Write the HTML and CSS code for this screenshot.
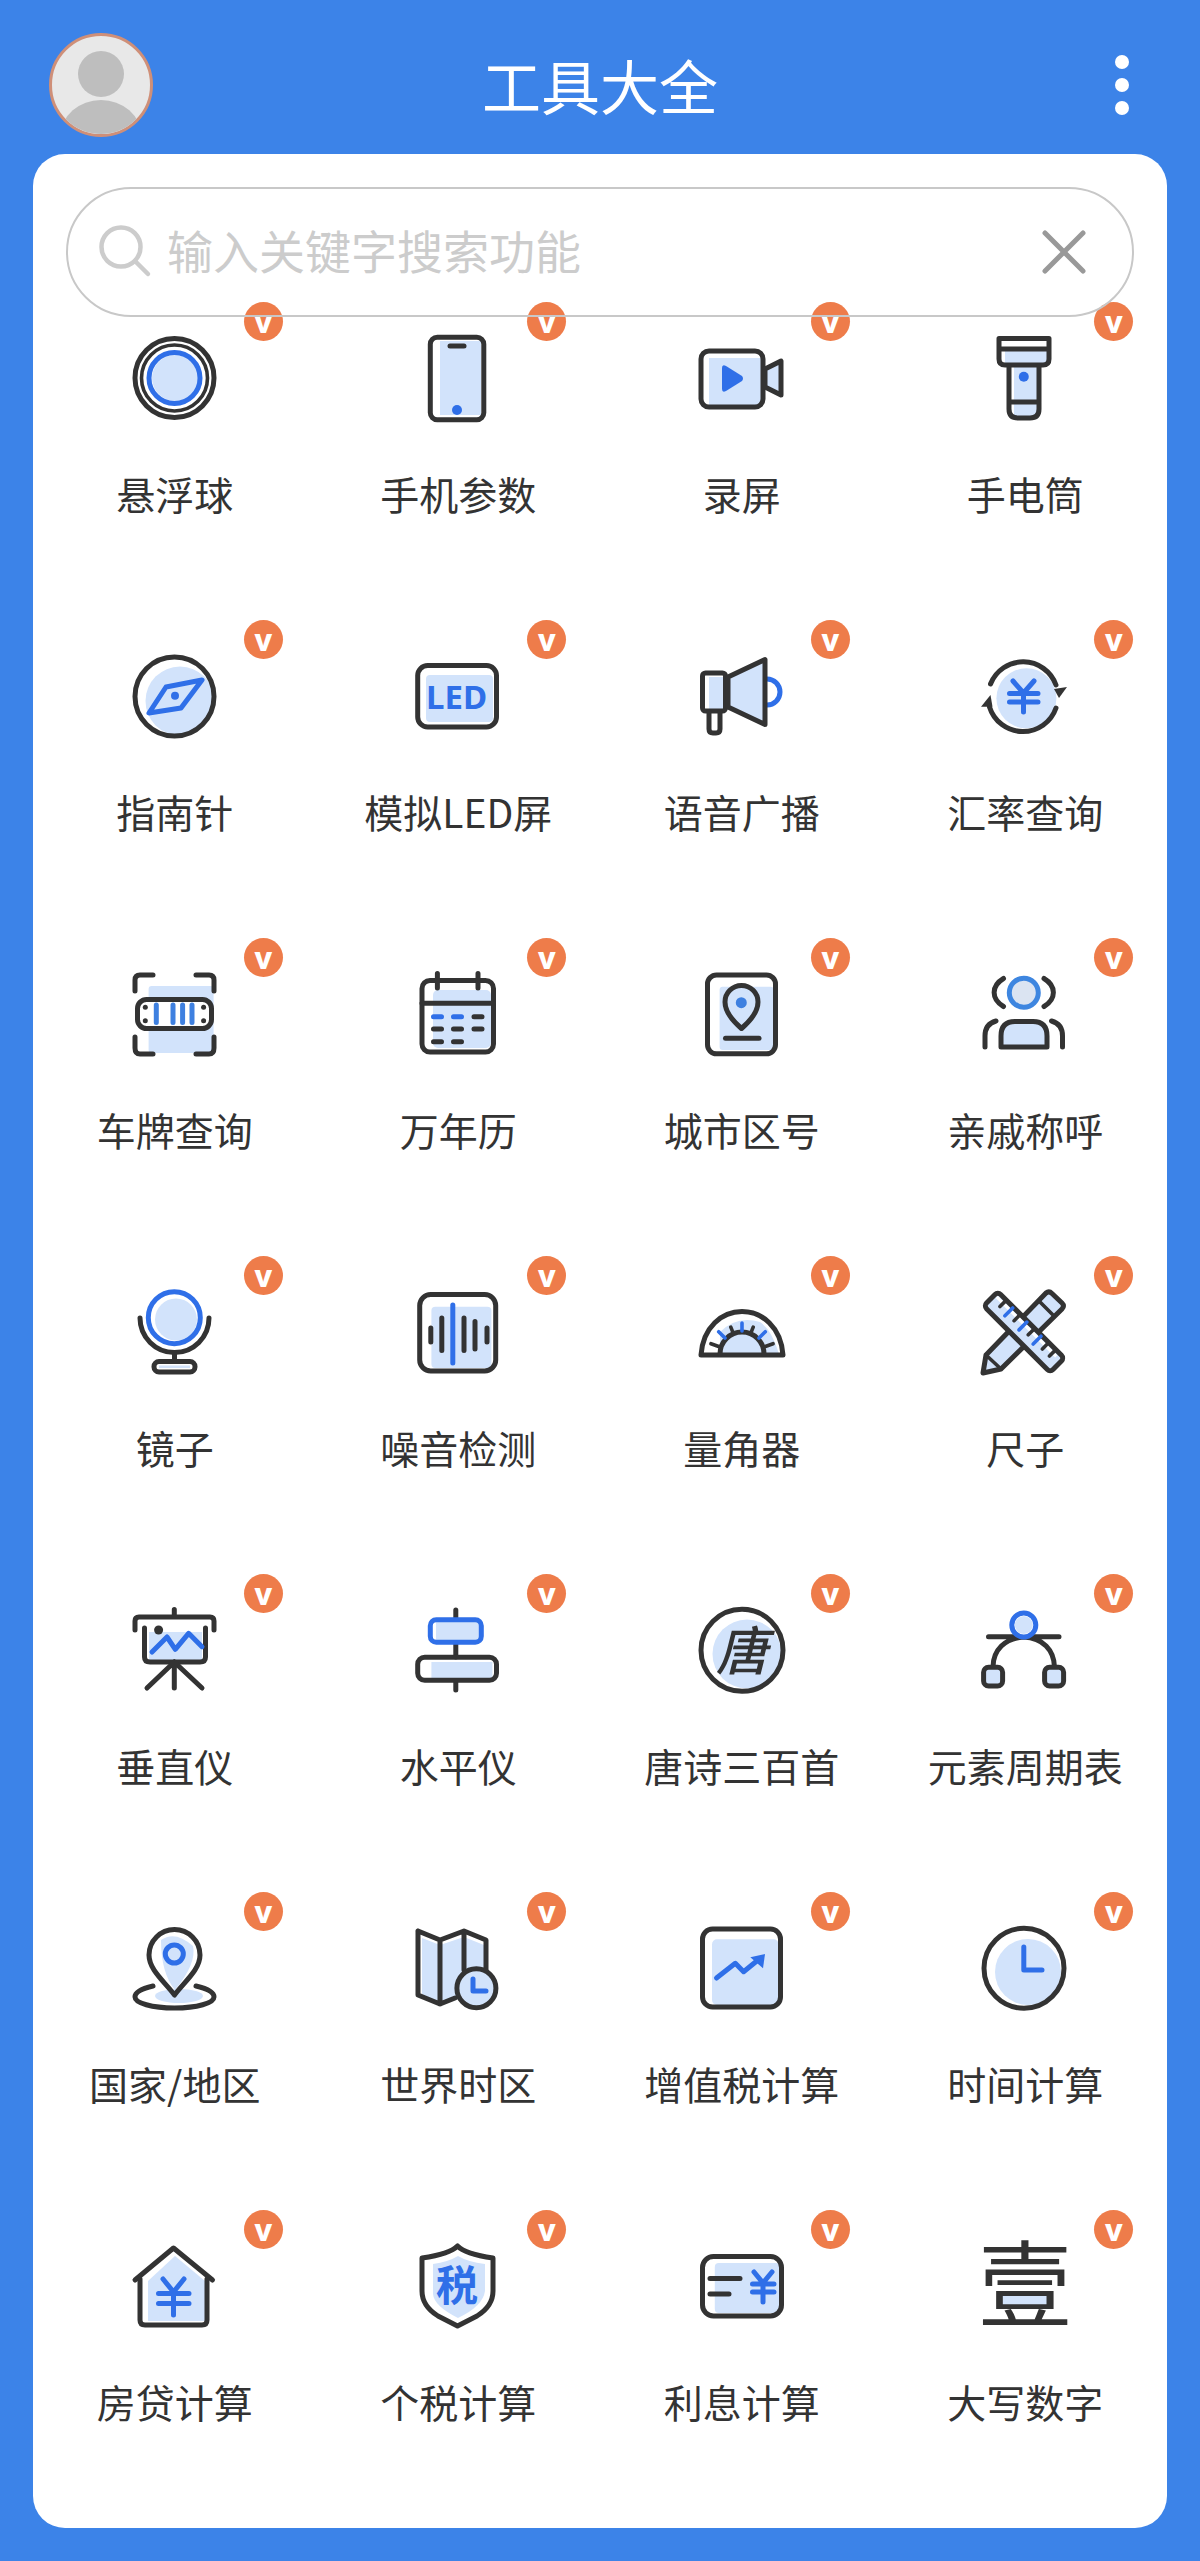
FILE: index.html
```html
<!DOCTYPE html>
<html lang="zh-CN">
<head>
    <meta charset="UTF-8">
    <meta name="viewport" content="width=device-width, initial-scale=1.0">
    <title>工具大全</title>
    <link rel="stylesheet" href="styles.css">
</head>
<body>
    <header class="topbar">
        <div class="avatar">
            <svg viewBox="0 0 98 98" width="98" height="98">
                <circle class="avatar-part" cx="49" cy="38" r="23"/>
                <ellipse class="avatar-part" cx="49" cy="99" rx="40" ry="35"/>
            </svg>
        </div>
        <h1 class="title">工具大全</h1>
        <div class="more"><span></span><span></span><span></span></div>
    </header>

    <main class="card">
        <div class="search">
            <svg class="search-icon" viewBox="0 0 56 56" width="56" height="56">
                <circle cx="24" cy="24" r="19.5"/>
                <path d="M38 38 L51 51"/>
            </svg>
            <span class="placeholder">输入关键字搜索功能</span>
            <svg class="clear-icon" viewBox="0 0 44 44" width="44" height="44">
                <path d="M3 3 L41 41 M41 3 L3 41"/>
            </svg>
        </div>

        <div class="tools">
            <div class="tool">
                <span class="vip">v</span>
                <svg class="icon" viewBox="0 0 100 100">
                    <circle class="l" cx="50" cy="50" r="23"/>
                    <circle class="d" cx="49.5" cy="50" r="39.5"/>
                    <circle class="d thin" cx="49.5" cy="50" r="33"/>
                    <circle class="b" cx="49.5" cy="50" r="25.5"/>
                </svg>
                <p class="name">悬浮球</p>
            </div>
            <div class="tool">
                <span class="vip">v</span>
                <svg class="icon" viewBox="0 0 100 100">
                    <rect class="l" x="32" y="13" width="41" height="74"/>
                    <rect class="d" x="22.3" y="9.3" width="53.5" height="82.4" rx="7"/>
                    <path class="d" d="M42 18 H56"/>
                    <circle class="bf" cx="49" cy="82" r="5"/>
                </svg>
                <p class="name">手机参数</p>
            </div>
            <div class="tool">
                <span class="vip">v</span>
                <svg class="icon" viewBox="0 0 100 100">
                    <rect class="l" x="17" y="30" width="53" height="47"/>
                    <rect class="d" x="9" y="23" width="62" height="56" rx="8"/>
                    <path class="bf" d="M30 40 Q30 36 34 38 L50 48 Q52 50.5 50 53 L34 63 Q30 65 30 61 Z"/>
                    <path class="d lf" d="M73 41 L89 33 V67 L73 59 Z"/>
                </svg>
                <p class="name">录屏</p>
            </div>
            <div class="tool">
                <span class="vip">v</span>
                <svg class="icon" viewBox="0 0 100 100">
                    <rect class="l" x="30" y="23" width="44" height="14"/>
                    <rect class="l" x="39" y="39" width="23" height="50"/>
                    <path class="d" d="M24 10.5 H74 V31 Q74 37 68 37 H30 Q24 37 24 31 Z M24 21 H74"/>
                    <path class="d" d="M34 38 V81 Q34 90 43 90 H55 Q64 90 64 81 V38 M34 74 H64"/>
                    <circle class="bf" cx="48.8" cy="48.7" r="5"/>
                </svg>
                <p class="name">手电筒</p>
            </div>

            <div class="tool">
                <span class="vip">v</span>
                <svg class="icon" viewBox="0 0 100 100">
                    <circle class="l" cx="55" cy="55" r="34.5"/>
                    <circle class="d" cx="49.5" cy="50.5" r="39.5"/>
                    <path class="b" d="M77 34 L41 41 L24 67 L56 62 Z"/>
                    <circle class="bf" cx="50" cy="49.7" r="4"/>
                </svg>
                <p class="name">指南针</p>
            </div>
            <div class="tool">
                <span class="vip">v</span>
                <svg class="icon" viewBox="0 0 100 100">
                    <rect class="l" x="18" y="29" width="67" height="47" rx="4"/>
                    <rect class="d" x="9.7" y="19.5" width="78.8" height="61.5" rx="10"/>
                    <text class="led" x="48.5" y="62.5">LED</text>
                </svg>
                <p class="name">模拟LED屏</p>
            </div>
            <div class="tool">
                <span class="vip">v</span>
                <svg class="icon" viewBox="0 0 100 100">
                    <path class="b" d="M75 33 A13 13 0 0 1 75 59"/>
                    <rect class="l" x="17" y="31" width="15" height="32"/>
                    <rect class="d" x="10.5" y="27" width="23" height="38" rx="3"/>
                    <path class="d lf" d="M36 31 L73 13.5 V78.5 L36 61 Z"/>
                    <path class="d" d="M17 66 V83 Q17 87 21 87 H24 Q28 87 28 83 V66"/>
                </svg>
                <p class="name">语音广播</p>
            </div>
            <div class="tool">
                <span class="vip">v</span>
                <svg class="icon" viewBox="0 0 100 100">
                    <circle class="l" cx="51.4" cy="52.3" r="30"/>
                    <path class="d" d="M15.5 38 A35 35 0 0 1 81 39"/>
                    <path class="d" d="M14.5 61 A35 35 0 0 0 81 62"/>
                    <path class="df" d="M92 41 L79 43 L84 52 Z"/>
                    <path class="df" d="M6 60.7 L17.5 60.7 L15.5 49 Z"/>
                    <path class="b" d="M38 35 L48.5 47 L59 35 M34.5 47.5 H63 M34.5 56 H63 M48.5 47 V66"/>
                </svg>
                <p class="name">汇率查询</p>
            </div>

            <div class="tool">
                <span class="vip">v</span>
                <svg class="icon" viewBox="0 0 100 100">
                    <rect class="l" x="23.6" y="22" width="65" height="67" rx="3"/>
                    <path class="d" d="M10 27 V16 Q10 11 15 11 H28 M71 11 H84 Q89 11 89 16 V27 M10 73 V84 Q10 90 15 90 H28 M71 90 H84 Q89 90 89 84 V73"/>
                    <rect class="d wf" x="12.5" y="35.5" width="74" height="29" rx="9"/>
                    <path class="b bar" d="M31.3 41 V58.5 M48 41 V58.5 M57.6 41 V58.5 M67 41 V58.5"/>
                    <circle class="df" cx="20.3" cy="43.3" r="2.5"/>
                    <circle class="df" cx="20.3" cy="56.7" r="2.5"/>
                    <circle class="df" cx="78.6" cy="43.3" r="2.5"/>
                    <circle class="df" cx="78.6" cy="56.7" r="2.5"/>
                </svg>
                <p class="name">车牌查询</p>
            </div>
            <div class="tool">
                <span class="vip">v</span>
                <svg class="icon" viewBox="0 0 100 100">
                    <rect class="l" x="25" y="26" width="58" height="58" rx="5"/>
                    <rect class="d" x="14" y="16.5" width="71.5" height="71.5" rx="8"/>
                    <path class="d" d="M29.4 9.5 V24 M70 9.5 V24 M14 39.3 H85.5"/>
                    <path class="b" d="M25.5 52.7 H33.5 M45.5 52.7 H53.5"/>
                    <path class="d" d="M66 52.7 H74 M25.5 65 H33.5 M45.5 65 H53.5 M66 65 H74 M25.5 77.7 H33.5 M45.5 77.7 H53.5"/>
                </svg>
                <p class="name">万年历</p>
            </div>
            <div class="tool">
                <span class="vip">v</span>
                <svg class="icon" viewBox="0 0 100 100">
                    <rect class="l" x="27.6" y="22.7" width="54" height="63.3" rx="3"/>
                    <rect class="d" x="15.5" y="11" width="68" height="78.8" rx="9"/>
                    <path class="d" d="M49.5 64.5 C42 58 33 49 33 38 A16.5 16.5 0 0 1 66 38 C66 49 57 58 49.5 64.5 Z"/>
                    <circle class="sf" cx="49.3" cy="38.7" r="5.5"/>
                    <path class="d" d="M33.5 74.3 H67"/>
                </svg>
                <p class="name">城市区号</p>
            </div>
            <div class="tool">
                <span class="vip">v</span>
                <svg class="icon" viewBox="0 0 100 100">
                    <circle class="ring" cx="48.8" cy="28.7" r="14.5"/>
                    <path class="d" d="M28.5 14.5 C16 22 16 35 28.5 42.5 M69 14.5 C81.5 22 81.5 35 69 42.5"/>
                    <path class="d lf" d="M26 83 V72 Q26 57.5 40 57.5 H58 Q72 57.5 72 72 V83 Z"/>
                    <path class="d" d="M10 83 V72 Q10 60 21 57 M87.5 83 V72 Q87.5 60 76.5 57"/>
                </svg>
                <p class="name">亲戚称呼</p>
            </div>

            <div class="tool">
                <span class="vip">v</span>
                <svg class="icon" viewBox="0 0 100 100">
                    <circle class="l" cx="51" cy="37.5" r="21"/>
                    <circle class="b" cx="49.3" cy="35.7" r="26"/>
                    <path class="d" d="M15 36 A34.5 34.5 0 0 0 84 36 M49.5 70.5 V78"/>
                    <rect class="d" x="29" y="79.5" width="41" height="10.5" rx="5"/>
                    <path class="l" d="M34 83.5 H65 V86 H34 Z"/>
                </svg>
                <p class="name">镜子</p>
            </div>
            <div class="tool">
                <span class="vip">v</span>
                <svg class="icon" viewBox="0 0 100 100">
                    <rect class="l" x="23.4" y="24.7" width="60" height="61.3" rx="4"/>
                    <rect class="d" x="11.7" y="12.6" width="76" height="76.4" rx="11"/>
                    <path class="d" d="M22.8 46 V60 M33.8 36 V68.5 M56 36 V68.5 M67 39.5 V67 M79 46 V60"/>
                    <path class="b" d="M44.8 23 V81"/>
                </svg>
                <p class="name">噪音检测</p>
            </div>
            <div class="tool">
                <span class="vip">v</span>
                <svg class="icon" viewBox="0 0 100 100">
                    <path class="l" d="M28 50 Q45 33 68 40 Q80 48 87 72 H28 Z"/>
                    <path class="d" d="M9 73 C11 45 30 29.5 50 29.5 C70 29.5 89 45 91 73 Z"/>
                    <path class="d" d="M28 72 A22 22 0 0 1 72 72"/>
                    <path class="d thin" d="M27.4 64.8 L19 61.7 M72.6 64.8 L81 61.7 M41 50.7 L38.8 45.2 M59 50.7 L61.2 45.2"/>
                    <path class="b thin" d="M33 56 L26.7 49.7 M67 56 L73.3 49.7 M50 49 V41"/>
                </svg>
                <p class="name">量角器</p>
            </div>
            <div class="tool">
                <span class="vip">v</span>
                <svg class="icon" viewBox="0 0 100 100">
                    <path class="d lf" d="M71 11 Q74 8.5 77 11.5 L87 21 Q90 24 87 27 L26 87 L8 91 L11 73 Z"/>
                    <path class="d thin" d="M11 73 L26 87 M64 19 L79 34"/>
                    <g transform="rotate(45 49 50)">
                        <rect class="d lf" x="2" y="40" width="94" height="20" rx="4"/>
                        <rect class="w" x="5" y="43" width="84" height="3"/>
                        <path class="d thin" d="M14 41 V49 M34 41 V49 M54 41 V49 M74 41 V49 M84 41 V49"/>
                        <path class="b thin" d="M24 41 V52 M44 41 V52 M64 41 V52"/>
                    </g>
                </svg>
                <p class="name">尺子</p>
            </div>

            <div class="tool">
                <span class="vip">v</span>
                <svg class="icon" viewBox="0 0 100 100">
                    <path class="l" d="M24 32 H77 V60 H24 Z"/>
                    <path class="d" d="M10 30 V21 Q10 17 14 17 H85 Q89 17 89 21 V30 M49.3 9.5 V16"/>
                    <path class="d" d="M19.5 28 V57 Q19.5 62 25 62 H75 Q80.5 62 80.5 57 V28"/>
                    <path class="b" d="M27 52 L42 37 L50.3 49.3 L63.6 33.3 L77 46.7"/>
                    <circle class="df" cx="33.6" cy="30" r="4.5"/>
                    <path class="d" d="M49.3 62 V88 M49.3 62 L22 88 M49.3 62 L77 88"/>
                </svg>
                <p class="name">垂直仪</p>
            </div>
            <div class="tool">
                <span class="vip">v</span>
                <svg class="icon" viewBox="0 0 100 100">
                    <path class="d" d="M47.8 10 V19 M47.8 42 V57 M47.8 81 V90"/>
                    <rect class="l" x="28" y="22" width="43" height="18"/>
                    <rect class="b" x="22.3" y="19.7" width="51" height="22.5" rx="6"/>
                    <rect class="l" x="23.4" y="62" width="61" height="16"/>
                    <rect class="d" x="9.7" y="57.3" width="78.8" height="23" rx="7"/>
                </svg>
                <p class="name">水平仪</p>
            </div>
            <div class="tool">
                <span class="vip">v</span>
                <svg class="icon" viewBox="0 0 100 100">
                    <circle class="l" cx="55" cy="54" r="34.5"/>
                    <circle class="d" cx="50" cy="50.3" r="41"/>
                    <text class="tang" x="50" y="70">唐</text>
                </svg>
                <p class="name">唐诗三百首</p>
            </div>
            <div class="tool">
                <span class="vip">v</span>
                <svg class="icon" viewBox="0 0 100 100">
                    <path class="d" d="M13.5 36.7 H84 M18 67 C18 50 30 38 48.8 37 C68 38 79 50 79.5 67"/>
                    <circle class="b wf" cx="48.8" cy="25" r="12"/>
                    <circle class="l" cx="48.8" cy="25" r="9"/>
                    <rect class="d lf" x="8.6" y="67.3" width="19" height="18.6" rx="5"/>
                    <rect class="d lf" x="69.6" y="67.3" width="19" height="18.6" rx="5"/>
                </svg>
                <p class="name">元素周期表</p>
            </div>

            <div class="tool">
                <span class="vip">v</span>
                <svg class="icon" viewBox="0 0 100 100">
                    <ellipse class="l" cx="54" cy="78" rx="24" ry="7"/>
                    <path class="d" d="M28 68 C15 71 10 75 10 79 C10 85 27 90 49.5 90 C72 90 89 85 89 79 C89 75 84 71 71 68"/>
                    <path class="l" d="M36 22 Q50 12 68 28 Q72 45 50 72 Q36 55 36 22 Z"/>
                    <path class="d" d="M49.5 77 C40 64 24 52 24 37 A25.5 25.5 0 0 1 75 37 C75 52 59 64 49.5 77 Z"/>
                    <circle class="b" cx="49.3" cy="36" r="9"/>
                </svg>
                <p class="name">国家/地区</p>
            </div>
            <div class="tool">
                <span class="vip">v</span>
                <svg class="icon" viewBox="0 0 100 100">
                    <path class="l" d="M14 20 L32 27 L56 19 L76 27 V60 L47 80 L32 85 L14 76 Z"/>
                    <path class="d" d="M10 13 L32 22 L56 13 L78 22 V60 M10 13 V77 L32 86 L47 80 M32 22 V86 M56 13 V52"/>
                    <circle class="d lf" cx="68.4" cy="70.3" r="19.5"/>
                    <path class="b" d="M65 61 V73 H78"/>
                </svg>
                <p class="name">世界时区</p>
            </div>
            <div class="tool">
                <span class="vip">v</span>
                <svg class="icon" viewBox="0 0 100 100">
                    <rect class="l" x="20" y="21.3" width="66.6" height="65.7" rx="5"/>
                    <rect class="d" x="10.5" y="11" width="78" height="78" rx="10"/>
                    <path class="b" d="M24.5 60 L43.3 45.3 L51.6 53.7 L66 42"/>
                    <path class="bf" d="M73 36 L58.3 39.3 L71 50.3 Z"/>
                </svg>
                <p class="name">增值税计算</p>
            </div>
            <div class="tool">
                <span class="vip">v</span>
                <svg class="icon" viewBox="0 0 100 100">
                    <circle class="l" cx="53" cy="54" r="33"/>
                    <circle class="d" cx="49" cy="50.3" r="40"/>
                    <path class="b" d="M48.8 29 V52 H67"/>
                </svg>
                <p class="name">时间计算</p>
            </div>

            <div class="tool">
                <span class="vip">v</span>
                <svg class="icon" viewBox="0 0 100 100">
                    <path class="l" d="M23 45 L50 20 L80 45 V85 H23 Z"/>
                    <path class="d" d="M10 44 L48.5 12 L87.5 44"/>
                    <path class="d" d="M15 43 V84 Q15 89 20 89 H77 Q82 89 82 84 V43"/>
                    <path class="b" d="M38 43 L48.5 56 L59 43 M33.5 57.5 H64 M33.5 67.5 H64 M48.5 56 V79"/>
                </svg>
                <p class="name">房贷计算</p>
            </div>
            <div class="tool">
                <span class="vip">v</span>
                <svg class="icon" viewBox="0 0 100 100">
                    <path class="l" d="M50 20 Q40 26 25 28 V58 Q26 70 50 82 Q75 70 77 55 V28 Q60 26 50 20 Z"/>
                    <path class="d" d="M49.5 10 Q42 18 14 22 V55 Q14 70 30 80 L49.5 90 L69 80 Q85 70 85 55 V22 Q57 18 49.5 10 Z"/>
                    <text class="shui" x="49" y="65">税</text>
                </svg>
                <p class="name">个税计算</p>
            </div>
            <div class="tool">
                <span class="vip">v</span>
                <svg class="icon" viewBox="0 0 100 100">
                    <rect class="l" x="22.8" y="27" width="65" height="50" rx="4"/>
                    <rect class="d" x="10.5" y="20.5" width="79" height="59.5" rx="11"/>
                    <path class="d" d="M18 42.5 H48 M18 58 H37"/>
                    <path class="b" d="M62 36 L71 47 L80 36 M60.5 48 H82 M60.5 56 H82 M71 47 V66"/>
                </svg>
                <p class="name">利息计算</p>
            </div>
            <div class="tool">
                <span class="vip">v</span>
                <svg class="icon" viewBox="0 0 100 100">
                    <rect class="l" x="26" y="58" width="48" height="12"/>
                    <text class="yi" x="50" y="84">壹</text>
                </svg>
                <p class="name">大写数字</p>
            </div>
        </div>
    </main>
</body>
</html>
```

FILE: styles.css
```css
* {
    box-sizing: border-box;
}

body {
    margin: 0;
    height: 2561px;
    background-color: #3c83e8;
    font-family: "Noto Sans CJK SC", "Noto Sans", sans-serif;
    color: #333;
}

.topbar {
    height: 154px;
    padding: 33px 49px 17px;
    display: grid;
    grid-template-columns: 1fr auto 1fr;
    align-items: center;
}

.avatar {
    width: 104px;
    height: 104px;
    border: 3px solid #cf8f78;
    border-radius: 50%;
    background-color: #e8e8e8;
    overflow: hidden;
}

.avatar svg {
    display: block;
}

.avatar-part {
    fill: #bebebe;
}

.title {
    margin: 0;
    font-size: 59px;
    font-weight: 400;
    line-height: 80px;
    color: #fff;
}

.more {
    justify-self: end;
    margin-right: 22px;
    display: flex;
    flex-direction: column;
    gap: 9px;
}

.more span {
    width: 14px;
    height: 14px;
    border-radius: 50%;
    background-color: #fff;
}

.card {
    margin: 0 33px;
    height: 2374px;
    padding-top: 33px;
    background-color: #fff;
    border-radius: 32px;
}

.search {
    position: relative;
    z-index: 1;
    height: 130px;
    margin: 0 33px;
    padding: 0 26px 0 29px;
    display: flex;
    align-items: center;
    border: 2px solid #c8c8c8;
    border-radius: 65px;
}

.search-icon {
    flex: none;
    margin-bottom: 2px;
    fill: none;
    stroke: #ccc;
    stroke-width: 4.5;
    stroke-linecap: round;
}

.placeholder {
    margin: 0 0 6px 14px;
    flex: 1;
    font-size: 46px;
    line-height: 60px;
    color: #ccc;
}

.clear-icon {
    flex: none;
    margin-right: 20px;
    fill: none;
    stroke: #999;
    stroke-width: 5;
    stroke-linecap: round;
}

.tools {
    margin-top: -16px;
    display: grid;
    grid-template-columns: repeat(4, 1fr);
    grid-auto-rows: 318px;
}

.tool {
    position: relative;
    padding-top: 27px;
    text-align: center;
}

.vip {
    position: absolute;
    top: 1px;
    left: calc(50% + 69px);
    width: 39px;
    height: 39px;
    border-radius: 50%;
    background-color: #ee7c4a;
    color: #fff;
    font-family: "Noto Sans", sans-serif;
    font-size: 30px;
    font-weight: 800;
    line-height: 39px;
}

.icon {
    display: block;
    width: 100px;
    height: 100px;
    margin: 0 auto;
    overflow: visible;
}

.name {
    margin: 40px 0 0;
    font-size: 39px;
    line-height: 50px;
    white-space: nowrap;
}

/* icon parts */
.l {
    fill: #d2e3fb;
}

.w {
    fill: #fff;
}

.d,
.b {
    fill: none;
    stroke-width: 5;
    stroke-linecap: round;
    stroke-linejoin: round;
}

.d {
    stroke: #333;
}

.b {
    stroke: #2f6fe8;
}

.df {
    fill: #333;
}

.bf {
    fill: #2f6fe8;
}

.sf {
    fill: #3e80e0;
}

.lf {
    fill: #d2e3fb;
}

.wf {
    fill: #fff;
}

.thin {
    stroke-width: 3.6;
}

.bar {
    stroke: #3e80e0;
}

.ring {
    fill: #dbe4f2;
    stroke: #3e86e0;
    stroke-width: 5;
}

.led {
    fill: #2f6fe8;
    font-family: "Noto Sans", sans-serif;
    font-size: 33px;
    font-weight: 700;
    text-anchor: middle;
}

.tang {
    fill: #333;
    font-size: 52px;
    font-style: italic;
    font-weight: 500;
    text-anchor: middle;
}

.shui {
    fill: #2f6fe8;
    font-size: 42px;
    font-weight: 700;
    text-anchor: middle;
}

.yi {
    fill: #333;
    font-size: 94px;
    text-anchor: middle;
}
```
